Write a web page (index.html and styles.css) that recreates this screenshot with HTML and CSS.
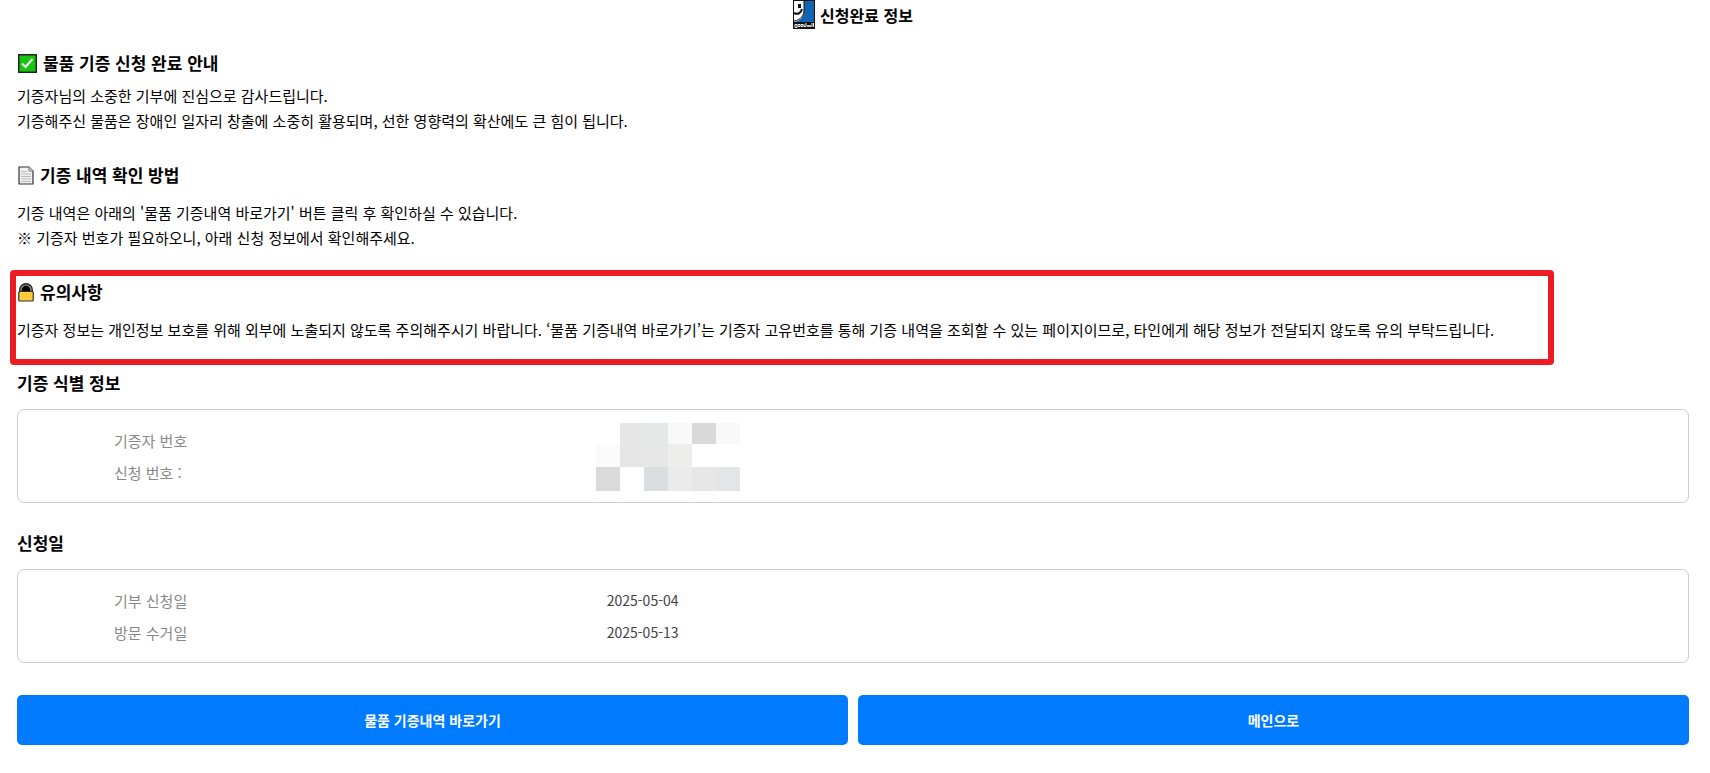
FILE: index.html
```
<!DOCTYPE html>
<html lang="ko">
<head>
    <meta charset="UTF-8">
    <meta name="viewport" content="width=device-width, initial-scale=1">
    <title>신청완료 정보</title>
    <link rel="stylesheet" href="styles.css">
</head>
<body>
    <header class="page-title">
        <svg class="logo" width="22" height="30" viewBox="0 0 22 30" aria-hidden="true">
            <rect width="22" height="29" fill="#111"/>
            <rect x="1" y="1" width="20" height="21" fill="#1263b0"/>
            <path d="M1 1h10v9c0 6-3 11-10 12z" fill="#fff"/>
            <path d="M11 1v9c0 5-3 10-10 11" fill="none" stroke="#111" stroke-width="1"/>
            <rect x="5" y="4" width="3" height="4" fill="#111"/>
            <path d="M1 13c4 2 7 0 8-4" fill="none" stroke="#111" stroke-width="2"/>
            <path d="M2 24.500h2v3H2zM5 24.500h2v2H5zM8 24.500h2v2H8zM11 24v2.500h2V23M14 25l1 2 1-2 1 2 1-2M19 23v4M20.500 23v4" fill="none" stroke="#eee" stroke-width="1"/>
        </svg>
        <h1>신청완료 정보</h1>
    </header>

    <section class="notice">
        <h2>
            <svg class="icon" width="19" height="19" viewBox="0 0 19 19" aria-hidden="true">
                <rect x=".75" y=".75" width="17.500" height="17.500" fill="#16c60c" stroke="#222" stroke-width="1.500"/>
                <path d="M4 9.500l3.500 3.500 7-8" fill="none" stroke="#fff" stroke-width="2"/>
            </svg>
            물품 기증 신청 완료 안내
        </h2>
        <p>기증자님의 소중한 기부에 진심으로 감사드립니다.<br>기증해주신 물품은 장애인 일자리 창출에 소중히 활용되며, 선한 영향력의 확산에도 큰 힘이 됩니다.</p>
    </section>

    <section class="notice spaced">
        <h2>
            <svg class="icon" width="16" height="19" viewBox="0 0 16 19" aria-hidden="true">
                <path d="M1 1h10l4 4v13H1z" fill="#f0f0f0" stroke="#333" stroke-width="1.200"/>
                <path d="M11 1v4h4" fill="#ddd" stroke="#777"/>
                <path d="M3 5.500h6M3 8h10M3 10.500h10M3 13h10M3 15.500h10" stroke="#bbb"/>
            </svg>
            기증 내역 확인 방법
        </h2>
        <p>기증 내역은 아래의 '물품 기증내역 바로가기' 버튼 클릭 후 확인하실 수 있습니다.<br>※ 기증자 번호가 필요하오니, 아래 신청 정보에서 확인해주세요.</p>
    </section>

    <section class="notice spaced highlight">
        <h2>
            <svg class="icon" width="16" height="19" viewBox="0 0 16 19" aria-hidden="true">
                <path d="M2 9V7a6 6 0 0 1 12 0v2z" fill="#000" stroke="#222" stroke-width="2"/>
                <path d="M3 9V7a5 5 0 0 1 10 0v2" fill="none" stroke="#999" stroke-width="1.200"/>
                <rect x=".75" y="8.500" width="14.500" height="9.500" rx="1" fill="#ffc83d" stroke="#333" stroke-width="1.200"/>
            </svg>
            유의사항
        </h2>
        <p>기증자 정보는 개인정보 보호를 위해 외부에 노출되지 않도록 주의해주시기 바랍니다. ‘물품 기증내역 바로가기’는 기증자 고유번호를 통해 기증 내역을 조회할 수 있는 페이지이므로, 타인에게 해당 정보가 전달되지 않도록 유의 부탁드립니다.</p>
    </section>

    <section class="info">
        <h2>기증 식별 정보</h2>
        <div class="info-box">
            <table>
                <tr>
                    <th scope="row">기증자 번호</th>
                    <td class="masked" rowspan="2">
                        <svg class="mosaic" width="146" height="75" viewBox="0 0 146 75" aria-hidden="true">
                            <rect x="24" width="24" height="44" fill="#e6e6e6"/>
                            <rect x="48" width="24" height="21" fill="#e6e8e7"/>
                            <rect x="72" width="24" height="21" fill="#f9f9f9"/>
                            <rect x="96" width="24" height="21" fill="#d9d9d9"/>
                            <rect x="120" width="24" height="21" fill="#f8f8f8"/>
                            <rect y="21" width="24" height="23" fill="#fbfbfb"/>
                            <rect x="48" y="21" width="24" height="23" fill="#e7e7e7"/>
                            <rect x="72" y="21" width="24" height="23" fill="#ededeb"/>
                            <rect y="44" width="24" height="24" fill="#dadada"/>
                            <rect x="48" y="44" width="24" height="24" fill="#dcdde0"/>
                            <rect x="72" y="44" width="24" height="24" fill="#ebebeb"/>
                            <rect x="96" y="44" width="24" height="24" fill="#e7e7e7"/>
                            <rect x="120" y="44" width="24" height="24" fill="#e4e5e7"/>
                            <rect y="68" width="24" height="7" fill="#fdfdfd"/>
                            <rect x="96" y="68" width="24" height="7" fill="#fdfdfd"/>
                        </svg>
                    </td>
                </tr>
                <tr>
                    <th scope="row">신청 번호 :</th>
                </tr>
            </table>
        </div>
    </section>

    <section class="info">
        <h2>신청일</h2>
        <div class="info-box">
            <table>
                <tr>
                    <th scope="row">기부 신청일</th>
                    <td>2025-05-04</td>
                </tr>
                <tr>
                    <th scope="row">방문 수거일</th>
                    <td>2025-05-13</td>
                </tr>
            </table>
        </div>
    </section>

    <div class="buttons">
        <button type="button">물품 기증내역 바로가기</button>
        <button type="button">메인으로</button>
    </div>
</body>
</html>
```

FILE: styles.css
```
* {
    box-sizing: border-box;
}
body {
    margin: 0;
    padding: 0 21px 28px 17px;
    background: #fff;
    color: #000;
    font-family: "Noto Sans CJK KR", sans-serif;
    font-size: 15px;
    line-height: 25px;
}
h1, h2, p {
    margin: 0;
}
.page-title {
    display: flex;
    justify-content: center;
    align-items: center;
    gap: 5px;
    height: 30px;
}
.page-title h1 {
    font-size: 16px;
}
h2 {
    font-size: 17px;
    line-height: 28px;
}
.notice {
    position: relative;
    margin-top: 19px;
}
.notice h2 {
    display: flex;
    align-items: center;
    gap: 6px;
}
.notice p {
    margin-top: 6px;
}
.notice.spaced {
    margin-top: 28px;
}
.notice.spaced p {
    margin-top: 11px;
}
.icon {
    flex: none;
    margin-left: 1px;
}
/* red frame drawn around the caution text */
.notice.highlight {
    width: fit-content;
    margin-bottom: 27px;
}
.highlight::after {
    content: "";
    position: absolute;
    inset: -8px -60px -23px -7px;
    border: 6px solid #ed1c24;
    border-radius: 4px;
    pointer-events: none;
}
.info {
    margin-top: 26px;
}
.info-box {
    margin-top: 12px;
    padding: 14px 96px;
    border: 1px solid #ccc;
    border-radius: 7px;
}
table {
    width: 100%;
    border-collapse: collapse;
}
th, td {
    height: 32px;
    padding: 0;
    text-align: left;
    font-weight: normal;
}
th {
    width: calc(100% / 3);
    color: #888;
}
td {
    color: #444;
    font-size: 14px;
}
.masked {
    position: relative;
}
.mosaic {
    position: absolute;
    top: -1px;
    left: -11px;
}
.buttons {
    display: flex;
    gap: 10px;
    margin-top: 32px;
}
.buttons button {
    flex: 1;
    height: 50px;
    border: 0;
    border-radius: 5px;
    background: #007bff;
    color: #fff;
    font-family: inherit;
    font-size: 14px;
    font-weight: bold;
    cursor: pointer;
}
```
